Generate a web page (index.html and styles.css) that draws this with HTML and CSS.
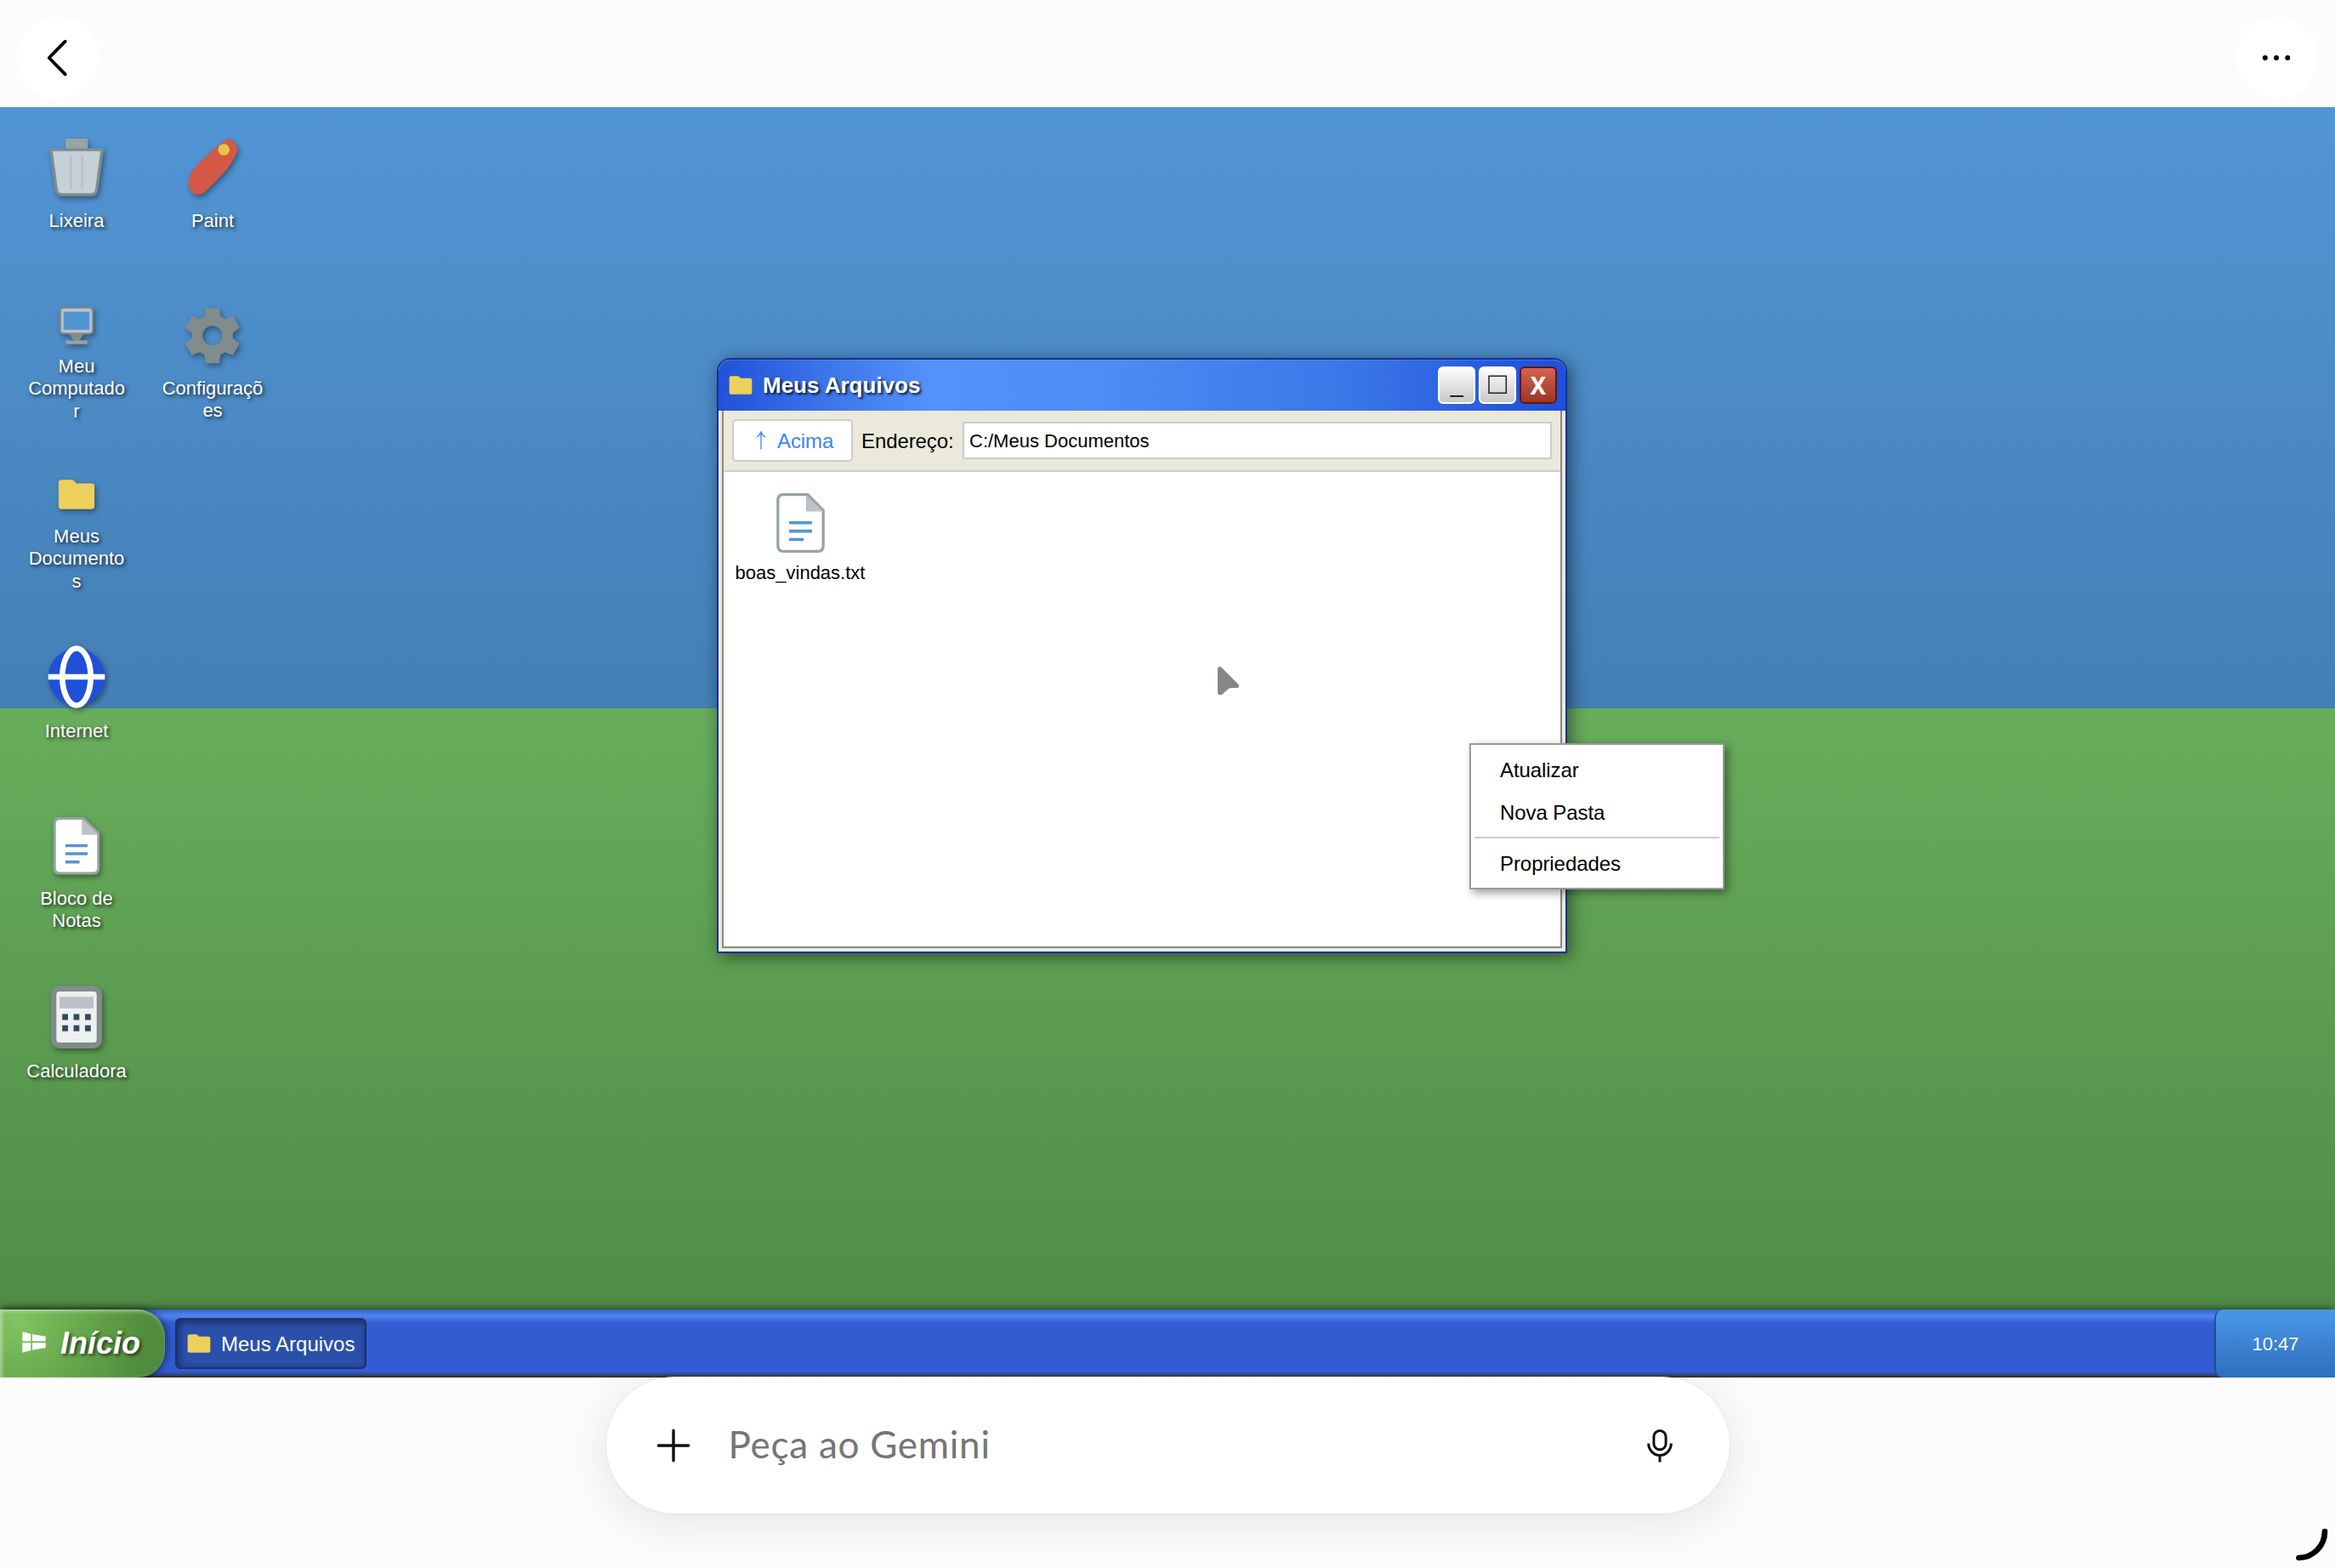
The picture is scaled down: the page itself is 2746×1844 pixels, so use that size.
FILE: index.html
```html
<!DOCTYPE html>
<html lang="pt-BR">
<head>
<meta charset="utf-8">
<title>Meus Arquivos</title>
<link rel="stylesheet" href="styles.css">
</head>
<body>
<svg class="defs" width="0" height="0" aria-hidden="true">
  <symbol id="folder" viewBox="0 0 43 35"><path fill="#edd05c" d="M4 .3H16.200C18 .3 19.500 2.200 21.300 4.500H39Q42.700 4.500 42.700 8.200V31Q42.700 34.700 39 34.700H4Q.3 34.700 .3 31V4Q.3 .3 4 .3Z"/></symbol>
  <symbol id="doc" viewBox="0 0 55 68"><path fill="#fff" stroke="#97a3a5" stroke-width="3.200" d="M8 1.600H35.500L53.400 19.500V60Q53.400 66.400 47 66.400H8Q1.600 66.400 1.600 60V8Q1.600 1.600 8 1.600Z"/><path fill="#bdc1c6" d="M33.700 2V21H53.300Z"/><path stroke="#5295d5" stroke-width="3.500" d="M14.400 33.700H40.500M14.400 43.300H40.500M14.400 53H31"/></symbol>
</svg>

<header class="app-bar">
  <button class="round-btn" aria-label="Voltar"><svg width="96" height="96" fill="none" stroke="#000" stroke-width="3.800" stroke-linecap="round" stroke-linejoin="round"><path d="M56.700 28.700 37.700 48 56.700 67.300"/></svg></button>
  <button class="round-btn" aria-label="Mais"><svg width="96" height="96"><circle cx="33.800" cy="48" r="3"/><circle cx="47" cy="48" r="3"/><circle cx="60.300" cy="48" r="3"/></svg></button>
</header>

<main class="screen">
  <section class="desktop">
    <div class="icons">
      <div class="icon">
        <svg class="art art-1" viewBox="30 146 120 100"><rect x="77" y="163" width="26.300" height="13.500" fill="#97a3a5"/><path fill="#c5d1d9" stroke="#818c8d" stroke-width="3.400" d="M60 176.100H120L113.800 222.500Q112.900 229 107 229H73Q67.100 229 66.200 222.500Z"/><path stroke="#bec0c6" stroke-width="3.200" d="M83.500 182.700V223M96.700 182.700V223"/></svg>
        <span>Lixeira</span>
      </div>
      <div class="icon">
        <svg class="art art-2" viewBox="190 346 120 97"><g fill="none" stroke="#818c8d" transform="translate(249.700 394.700)"><circle r="17.900" stroke-width="12.800"/><g fill="#818c8d" stroke="none"><path id="t" d="M-7.900-32.500H7.900L9.900-21H-9.900Z"/><use href="#t" transform="rotate(60)"/><use href="#t" transform="rotate(120)"/><use href="#t" transform="rotate(180)"/><use href="#t" transform="rotate(240)"/><use href="#t" transform="rotate(300)"/></g></g></svg>
        <span>Configurações</span>
      </div>
      <div class="icon">
        <svg class="art art-3" viewBox="30 346 120 71"><path fill="#818c8d" d="M81.500 392.500H98.500L93.500 401H86.500Z"/><rect x="71" y="362" width="38" height="30.200" rx="4" fill="#bec1c7" stroke="#818c8d" stroke-width="2"/><rect x="74.700" y="366.300" width="30.600" height="21.700" fill="#5295d5" stroke="#aab5c0" stroke-width=".6"/><rect x="77.300" y="400.300" width="25.400" height="4.400" fill="#97a3a5" stroke="#818c8d" stroke-width=".6"/></svg>
        <span>Meu Computador</span>
      </div>
      <div class="icon">
        <svg class="art art-3" viewBox="30 546 120 71"><use href="#folder" x="68.500" y="564" width="43" height="35"/></svg>
        <span>Meus Documentos</span>
      </div>
      <div class="icon">
        <svg class="art art-1" viewBox="30 746 120 100"><circle cx="90" cy="796" r="33.300" fill="#2050d8"/><path stroke="#fff" stroke-width="6.700" d="M56.700 796H123.300"/><ellipse cx="90" cy="796" rx="16.700" ry="33.500" fill="none" stroke="#fff" stroke-width="6.700"/></svg>
        <span>Internet</span>
      </div>
      <div class="icon">
        <svg class="art art-2" viewBox="30 946 120 97"><use href="#doc" x="62.500" y="960.700" width="55" height="68"/></svg>
        <span>Bloco de Notas</span>
      </div>
      <div class="icon">
        <svg class="art art-1" viewBox="30 1146 120 100"><rect x="60" y="1159.300" width="60" height="73.700" rx="10" fill="#818c8d"/><rect x="66.300" y="1166" width="47.400" height="60" rx="3.500" fill="#ecf0f1"/><path fill="#bdc1c6" d="M70 1172.300H110V1186H70Z"/><path fill="#34495e" d="M73.200 1192.500h6.800v7h-6.800zM86.500 1192.500h6.800v7h-6.800zM100 1192.500h6.800v7h-6.800zM73.200 1205.800h6.800v7h-6.800zM86.500 1205.800h6.800v7h-6.800zM100 1205.800h6.800v7h-6.800z"/></svg>
        <span>Calculadora</span>
      </div>
      <div class="icon paint">
        <svg class="art art-1" viewBox="190 146 120 100"><path fill="#d45845" d="M267.500 163.500Q269.500 162 271.500 163.700Q278 169.500 279.300 175.500Q279.600 177.500 278.500 179.500C273.500 190.500 267.500 199.500 259 208C252 215 246 221.500 240 226.500Q236 229.500 231 229C225.500 228 221.700 223 221.700 215C221.800 208.500 225 202 230 196.500C241 184.500 254 172 267.500 163.500Z"/><circle cx="263.300" cy="176" r="6.800" fill="#e7c446"/></svg>
        <span>Paint</span>
      </div>
    </div>

    <section class="window">
      <div class="titlebar">
        <svg class="small-folder"><use href="#folder"/></svg>
        <h1>Meus Arquivos</h1>
        <button class="win-btn" aria-label="Minimizar"><svg width="40" height="40"><path stroke="#000" stroke-width="1.700" d="M12.300 32.900H28"/></svg></button>
        <button class="win-btn" aria-label="Maximizar"><svg width="40" height="40"><path fill="none" stroke="#222" stroke-width="1.500" d="M10 9.300H30.300V29.200H10Z"/></svg></button>
        <button class="win-btn close">X</button>
      </div>
      <div class="win-body">
        <div class="toolbar">
          <button class="up-btn"><svg width="12" height="22" fill="none" stroke="#3a86f5" stroke-width="1.300"><path d="M6 21.500V1.500M1 7Q4.500 5 6 1Q7.500 5 11 7"/></svg><span>Acima</span></button>
          <span class="label">Endereço:</span>
          <div class="address">C:/Meus Documentos</div>
        </div>
        <div class="files">
          <div class="file">
            <svg class="file-art"><use href="#doc"/></svg>
            <span>boas_vindas.txt</span>
          </div>
        </div>
      </div>
    </section>

    <svg class="cursor" width="28" height="36"><path fill="#868686" d="M1 3.500C1 1 4 0 5.800 2.200L25.500 22C27 24 26 26 23.500 26H16.500Q14.500 26 13 27.500L7 33C4.500 35 1 34.500 1 31.500Z"/></svg>

    <div class="menu">
      <div class="menu-item">Atualizar</div>
      <div class="menu-item">Nova Pasta</div>
      <hr>
      <div class="menu-item">Propriedades</div>
    </div>
  </section>

  <nav class="taskbar">
    <button class="start"><svg width="28" height="26" fill="#fff"><path d="M.3 0 10.300 2.700V11.200H.3ZM12 3 27.700 5.800V11.200H12ZM.3 13H10.300V22L.3 24.700ZM12 13H27.700V19L12 21.700Z"/></svg><span>Início</span></button>
    <button class="task"><svg class="small-folder"><use href="#folder"/></svg><span>Meus Arquivos</span></button>
    <div class="tray">10:47</div>
  </nav>
</main>

<footer class="prompt-area">
  <div class="prompt">
    <svg width="40" height="40" fill="none" stroke="#111" stroke-width="3.400" stroke-linecap="round"><path d="M20 2.300V37.700M2.300 20H37.700"/></svg>
    <span class="placeholder">Peça ao Gemini</span>
    <svg width="32" height="40" fill="none" stroke="#111" stroke-width="3"><rect x="8.900" y="2.500" width="14.200" height="22.300" rx="7.100"/><path d="M2.700 17.500A13.300 14 0 0 0 29.300 17.500M16 31.500V39.500"/></svg>
  </div>
  <svg class="corner" width="44" height="44" fill="none" stroke="#000" stroke-width="6.700" stroke-linecap="round"><path d="M36 5A31 31 0 0 1 5.500 36"/></svg>
</footer>
</body>
</html>
```
FILE: styles.css
```css
* { box-sizing: border-box; }

body {
  margin: 0;
  width: 2746px;
  height: 1844px;
  display: flex;
  flex-direction: column;
  overflow: hidden;
  background: #fcfcfc;
  color: #000;
  font-family: "Liberation Sans", Arial, sans-serif;
  font-variant-ligatures: none;
}

button { margin: 0; padding: 0; border: 0; font: inherit; color: inherit; }
svg { display: block; flex: none; }
.defs { position: absolute; }

.app-bar {
  height: 126px;
  flex: none;
  padding: 20px;
  display: flex;
  justify-content: space-between;
}
.round-btn { width: 96px; height: 96px; border-radius: 50%; background: #fff; }

.screen {
  height: 1494px;
  flex: none;
  display: flex;
  flex-direction: column;
  overflow: hidden;
}

.desktop {
  position: relative;
  height: 1414px;
  flex: none;
  padding: 20px 30px;
  background:
    linear-gradient(#5295d5, #447fb5) top / 100% 50% no-repeat,
    linear-gradient(#68ad5c, #508c46) bottom / 100% 50% no-repeat;
}

.icons {
  display: grid;
  grid-template-columns: 120px 120px;
  grid-auto-rows: 200px;
  column-gap: 40px;
}
.icon {
  grid-column: 1;
  color: #fff;
  font-size: 22px;
  line-height: 26.4px;
  text-align: center;
  overflow-wrap: break-word;
  text-shadow: 2px 2px 4px rgba(0, 0, 0, .8);
}
.icon:nth-child(2) { grid-column: 2; grid-row: 2; }
.icon.paint { grid-column: 2; grid-row: 1; }
.art { width: 120px; margin-bottom: 1px; filter: drop-shadow(2px 3px 3px rgba(0, 0, 0, .4)); }
.art-1 { height: 100px; }
.art-2 { height: 97px; }
.art-3 { height: 71px; }

.window {
  position: absolute;
  left: 843px;
  top: 295px;
  width: 1000px;
  height: 700px;
  display: flex;
  flex-direction: column;
  border: 2px solid #12309a;
  border-radius: 16px 16px 0 0;
  background: #ece9d8;
  box-shadow: 4px 4px 20px rgba(0, 0, 0, .5);
}
.titlebar {
  height: 60px;
  flex: none;
  padding: 0 10px 0 12px;
  display: flex;
  align-items: center;
  gap: 4px;
  border-radius: 14px 14px 0 0;
  background: linear-gradient(90deg, #2152d8, #3f78ea 14%, #5492fa 25%, #4f8cf4 45%, #3a76e6 75%, #2152dc 97%, #1f4fdc);
  box-shadow: inset 0 1px 1px rgba(255, 255, 255, .15);
}
.small-folder { width: 28px; height: 22px; }
.titlebar h1 {
  flex: 1;
  margin: 0 0 0 8px;
  padding-top: 1px;
  color: #fff;
  font-size: 26px;
  text-shadow: 2px 2px 3px rgba(0, 0, 0, .85);
}
.win-btn {
  width: 44px;
  height: 44px;
  border: 2px solid #fff;
  border-radius: 6px;
  background: linear-gradient(#fdfdfd, #c8c8c8);
}
.win-btn.close {
  border-color: #5c1712;
  background: linear-gradient(#d4644f, #9c3426);
  color: #fff;
  font: bold 28px/38px "Noto Sans", sans-serif;
}
.win-body {
  flex: 1;
  margin: 0 4px 4px;
  display: flex;
  flex-direction: column;
  border: 2px solid #888;
  border-top: 0;
  background: #fff;
}
.toolbar {
  height: 72px;
  padding: 0 10px;
  display: flex;
  align-items: center;
  border-bottom: 2px solid #ccc;
  background: #ebe9da;
  font-size: 24px;
}
.up-btn {
  width: 142px;
  height: 50px;
  padding-left: 26px;
  display: flex;
  align-items: center;
  gap: 13px;
  border: 2px solid #ccc;
  border-radius: 5px;
  background: #fff;
  color: #3a86f5;
}
.up-btn span, .label { padding-top: 1px; letter-spacing: -.1px; }
.label { width: 129px; padding-left: 10px; }
.address {
  flex: 1;
  height: 44px;
  padding-left: 6px;
  border: 2px solid #ccc;
  background: #fff;
  font-size: 22px;
  line-height: 41px;
}
.files { padding: 25px 10px; }
.file {
  width: 160px;
  display: flex;
  flex-direction: column;
  align-items: center;
  font-size: 22px;
  line-height: 26px;
}
.file-art { width: 57px; height: 70px; margin-bottom: 11px; }

.cursor { position: absolute; left: 1431px; top: 657px; }

.menu {
  position: absolute;
  left: 1728px;
  top: 748px;
  width: 300px;
  padding: 4px;
  border: 2px solid #999;
  background: #fff;
  box-shadow: 4px 4px 10px rgba(0, 0, 0, .4);
  font-size: 24px;
  letter-spacing: -.07px;
}
.menu-item { height: 50px; padding-left: 30px; line-height: 52px; }
.menu hr { height: 2px; margin: 4px 0; border: 0; background: #ccc; }

.taskbar {
  position: relative;
  height: 80px;
  flex: none;
  display: flex;
  align-items: center;
  background: linear-gradient(#345fce 0, #4074e0 4px, #5084ec 7px, #4a7ce6 10px, #325cd2 16px, #325cd2 73px, #2c4a9c 76px, #333 79px);
  box-shadow: 0 0 10px rgba(0, 0, 0, .7);
}
.start {
  width: 194px;
  height: 80px;
  padding: 0 0 3px 26px;
  display: flex;
  align-items: center;
  gap: 17px;
  border-radius: 0 32px 32px 0;
  background: radial-gradient(circle at 20px 14px, #82c460, #6cae50 60px, #508c3c 155px);
  box-shadow: inset 2px 2px 5px rgba(255, 255, 255, .5), 2px 0 10px rgba(0, 0, 0, .5);
  color: #fff;
  font-size: 36px;
  font-weight: bold;
  font-style: italic;
  text-shadow: 2px 2px 4px rgba(0, 0, 0, .7);
}
.start span { padding-top: 2px; }
.task {
  width: 225px;
  height: 60px;
  margin-left: 12px;
  padding-left: 12px;
  display: flex;
  align-items: center;
  gap: 12px;
  border: 2px solid #1a306e;
  border-radius: 6px;
  background: #2b50aa;
  box-shadow: inset 2px 2px 10px rgba(0, 0, 0, .45);
  color: #fff;
  font-size: 24px;
}
.task span { padding-top: 1px; }
.tray {
  width: 142px;
  height: 80px;
  margin-left: auto;
  border-left: 2px solid #1a5096;
  border-radius: 10px 0 0 10px;
  background: linear-gradient(#4898e8, #2e6ebc);
  color: #fff;
  font-size: 22px;
  line-height: 82px;
  text-align: center;
}

.prompt-area {
  position: relative;
  flex: 1;
  display: flex;
  justify-content: center;
  align-items: flex-start;
  clip-path: inset(-1px 0 0 0);
}
.prompt {
  width: 1321px;
  height: 161px;
  margin-top: -1px;
  padding: 0 66px 0 59px;
  display: flex;
  align-items: center;
  border-radius: 81px;
  background: #fff;
  box-shadow: 0 10px 60px rgba(0, 0, 0, .1), 0 0 2px rgba(0, 0, 0, .12);
}
.placeholder {
  flex: 1;
  margin-left: 45px;
  padding-bottom: 2px;
  color: #757575;
  font: 44px/1.2 Lato, sans-serif;
  letter-spacing: .75px;
}
.corner { position: absolute; right: 4px; bottom: 4px; }
```
